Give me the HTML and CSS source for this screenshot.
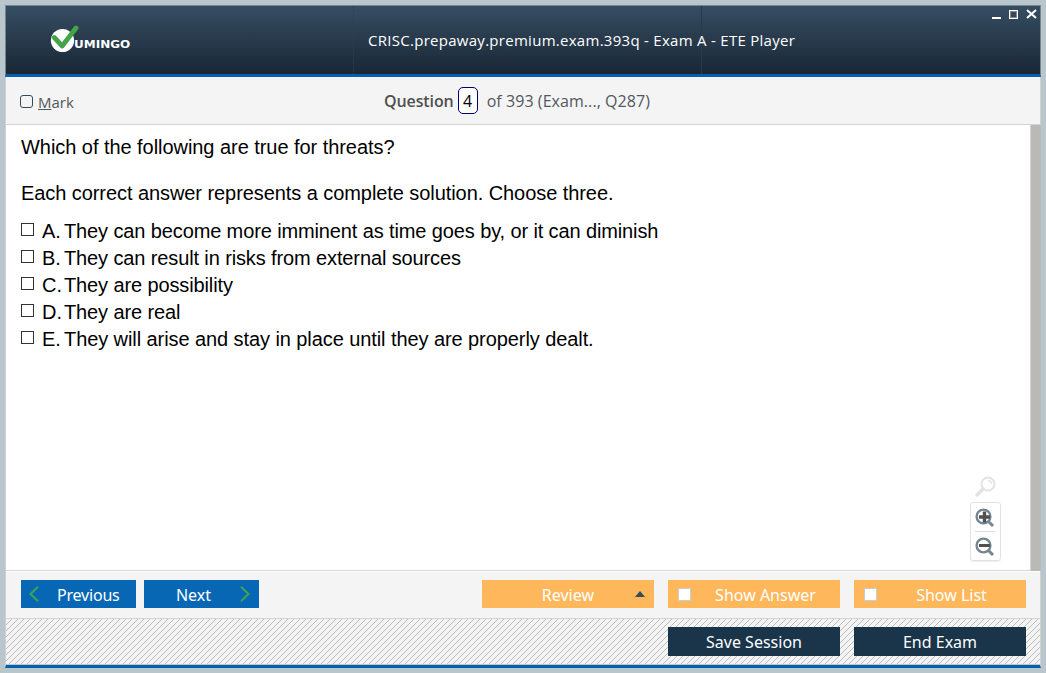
FILE: index.html
```html
<!DOCTYPE html>
<html lang="en">
<head>
<meta charset="utf-8">
<title>ETE Player</title>
<link rel="stylesheet" href="styles.css">
</head>
<body>
<div class="window">
  <header class="titlebar">
    <div class="brand">
      <svg class="brand-mark" width="30" height="28" viewBox="0 0 30 28"><circle cx="12.500" cy="15.500" r="11.600" fill="#fff"/><path d="M4.300 12.500L12.200 21L26 3" fill="none" stroke="#43a547" stroke-width="4.800" stroke-linecap="round" stroke-linejoin="round"/></svg>
      <span class="brand-name">UMINGO</span>
    </div>
    <h1 class="title"><span>CRISC.prepaway.premium.exam.393q - Exam A - ETE Player</span></h1>
    <div class="spacer"></div>
    <svg class="controls" width="47" height="12" viewBox="0 0 47 12" shape-rendering="crispEdges"><path d="M1 8h9v2H1z" fill="#fff"/><path d="M18.500 1.500h8v8h-8z" fill="none" stroke="#fff"/><path d="M19.500 2.500h6v6h-6z" fill="none" stroke="#8d8980"/><path d="M36 1L45 9M45 1L36 9" stroke="#fff" stroke-width="2" shape-rendering="auto"/></svg>
  </header>
  <div class="toolbar">
    <label class="mark"><i class="mark-box"></i><span><u>M</u>ark</span></label>
    <div class="position"><b>Question</b><span class="number">4</span><span class="total">of 393 (Exam..., Q287)</span></div>
  </div>
  <main class="content">
    <div class="page">
      <p class="q1"><span>Which of the following are true for threats?</span></p>
      <p class="q2"><span>Each correct answer represents a complete solution. Choose three.</span></p>
      <ul class="answers">
        <li><i class="box"></i><b>A.</b><span>They can become more imminent as time goes by, or it can diminish</span></li>
        <li><i class="box"></i><b>B.</b><span>They can result in risks from external sources</span></li>
        <li><i class="box"></i><b>C.</b><span>They are possibility</span></li>
        <li><i class="box"></i><b>D.</b><span>They are real</span></li>
        <li><i class="box"></i><b>E.</b><span>They will arise and stay in place until they are properly dealt.</span></li>
      </ul>
      <div class="zoom">
        <svg width="22" height="22" viewBox="0 0 22 22" fill="none" stroke="#e2e2e2"><circle cx="13" cy="8" r="6.500" stroke-width="2"/><path d="M8 13L2 19" stroke-width="3.200" stroke-linecap="round"/><path d="M13 4.500a3.500 3.500 0 0 1 3.500 3.500" stroke-width="1.300"/></svg>
        <div class="zoom-panel">
          <svg width="20" height="20" viewBox="0 0 20 20" fill="none"><circle cx="8.500" cy="8.500" r="6.900" stroke="#758592" stroke-width="2.400"/><path d="M13.500 13.500L18 18" stroke="#758592" stroke-width="3"/><path d="M9.500 3.500v11M4 9h11" stroke="#50504f" stroke-width="3.400"/></svg>
          <hr>
          <svg width="20" height="20" viewBox="0 0 20 20" fill="none"><circle cx="8.500" cy="8.500" r="6.900" stroke="#758592" stroke-width="2.400"/><path d="M13.500 13.500L18 18" stroke="#758592" stroke-width="3"/><path d="M4 8.500h11" stroke="#50504f" stroke-width="3"/></svg>
        </div>
      </div>
    </div>
    <div class="scrollbar"></div>
  </main>
  <div class="actions">
    <button class="btn nav prev"><svg width="10" height="16" viewBox="0 0 10 16"><path d="M9 .8L1.500 8L9 15.200" fill="none" stroke="#3fa451" stroke-width="2"/></svg><span>Previous</span></button>
    <button class="btn nav next"><span>Next</span><svg width="10" height="16" viewBox="0 0 10 16"><path d="M1 .8L8.500 8L1 15.200" fill="none" stroke="#3fa451" stroke-width="2"/></svg></button>
    <div class="spacer"></div>
    <button class="btn option review"><span>Review</span><svg width="10" height="6" viewBox="0 0 10 6"><path d="M5 0L10 6H0z" fill="#344b5e"/></svg></button>
    <button class="btn option check"><i></i><span>Show Answer</span></button>
    <button class="btn option check"><i></i><span>Show List</span></button>
  </div>
  <footer class="session">
    <button class="btn dark"><span>Save Session</span></button>
    <button class="btn dark"><span>End Exam</span></button>
  </footer>
</div>
</body>
</html>
```
FILE: styles.css
```css
* { box-sizing: border-box; }
body { margin: 0; padding: 5px; width: 1046px; height: 673px; overflow: hidden; background: #b9c6cc; font-family: "Open Sans", sans-serif; }
p, h1, ul { margin: 0; padding: 0; font-weight: 400; }
svg { display: block; flex: none; }
.spacer { flex: 1; }
.window { width: 1036px; height: 663px; display: flex; flex-direction: column; border-left: 1px solid #d0d0d0; border-right: 1px solid #d0d0d0; border-bottom: 3px solid #0560b0; }
.titlebar { height: 72px; margin: 0 -1px; display: flex; flex: none; border: 1px solid #76868f; border-bottom: 3px solid #0560b0; background: linear-gradient(#364d62, #192735); }
.brand { width: 348px; padding: 19px 0 0 44px; display: flex; border-right: 1px dotted #293e57; }
.brand-name { margin: 10px 0 0 -6px; color: #fff; font: bold 10px/20px "DejaVu Sans", sans-serif; transform: scaleX(1.2); transform-origin: left; }
.title { width: 348px; padding: 23px 0 0 14px; color: #fff; font-size: 15px; letter-spacing: 0.28px; line-height: 22px; white-space: nowrap; border-right: 1px solid #293b4b; }
.controls { margin: 3px 2px 0 0; }
.toolbar { height: 48px; flex: none; display: flex; background: #f4f4f4; border-bottom: 1px solid #d3d3d3; color: #52585d; font-size: 16px; line-height: 24px; }
.mark { width: 378px; display: flex; padding: 13px 0 0 14px; font-size: 15px; }
.mark-box { width: 13px; height: 13px; margin: 5px 5px 0 0; border: 1px solid #344b5e; border-radius: 3px; }
.position { display: flex; padding-top: 10px; line-height: 28px; }
.position b { font-weight: 600; color: #505050; letter-spacing: -0.1px; }
.number { width: 20px; height: 27px; margin: 0 9px 0 4px; text-align: center; line-height: 27px; border: 1px solid #00006e; border-radius: 5px; background: #fff; color: #000; }
.total { letter-spacing: 0.06px; }
.content { flex: 1; min-height: 0; display: flex; background: #fff; }
.page { position: relative; flex: 1; padding: 10px 0 0 15px; border-right: 1px solid #d3d3d3; border-bottom: 1px solid #d3d3d3; color: #000; font: 20px/24px "Liberation Sans", Arial, sans-serif; }
.scrollbar { width: 10px; margin-right: -1px; background: #bbb9b5; }
.q1 { letter-spacing: -0.05px; }
.q2 { margin-top: 22px; letter-spacing: -0.07px; }
.answers { list-style: none; margin-top: 13px; }
.answers li { display: flex; height: 27px; line-height: 26px; white-space: nowrap; }
.answers b { width: 22px; margin-left: 8px; font-weight: 400; }
.answers span { letter-spacing: -0.12px; }
.answers li:last-child span { letter-spacing: -0.08px; }
.box { width: 13px; height: 13px; margin-top: 5px; border: 1px solid #333; }
.zoom { position: absolute; right: 29px; bottom: 9px; width: 31px; }
.zoom > svg { margin: 0 0 4px 5px; }
.zoom-panel { height: 59px; padding: 5px 5px 5px 4px; border: 1px solid #e2e2e2; border-radius: 3px; box-shadow: 0 1px 1px #eee; }
.zoom-panel hr { height: 1px; margin: 3px 0 5px 0; border: 0; background: #ddd; }
.actions { height: 48px; flex: none; display: flex; padding: 8px 14px 0 15px; border-top: 1px solid #fff; border-bottom: 1px solid #d3d3d3; background: #f4f4f4; }
.btn { display: flex; align-items: center; justify-content: center; height: 28px; padding: 0; border: 0; color: #fff; font: 16px/28px "Noto Sans", sans-serif; white-space: nowrap; }
.actions .btn span { padding-top: 2px; }
.nav { width: 115px; background: #0867b5; }
.prev { justify-content: flex-start; padding-left: 8px; margin-right: 8px; }
.prev span { margin-left: 18px; letter-spacing: -0.2px; }
.next { justify-content: flex-end; padding-right: 9px; }
.next span { margin-right: 29px; }
.option { width: 172px; margin-left: 14px; background: #ffb75c; }
.review { justify-content: flex-end; padding-right: 9px; }
.review span { margin-right: 41px; }
.check { justify-content: flex-start; padding-left: 10px; }
.check i { width: 13px; height: 13px; border: 1px solid #ccc; background: #fff; }
.check span { flex: 1; text-align: center; }
.session { height: 46px; flex: none; display: flex; justify-content: flex-end; padding: 8px 14px 0 0; border-bottom: 1px solid #c5c5c5; background: #f4f4f4 url("data:image/svg+xml,%3Csvg xmlns='http://www.w3.org/2000/svg' width='6' height='6'%3E%3Cpath d='M5 0h1v1h-1zM4 1h1v1h-1zM3 2h1v1h-1zM2 3h1v1h-1zM1 4h1v1h-1zM0 5h1v1h-1z' fill='%23bdbdbd'/%3E%3C/svg%3E"); }
.dark { width: 172px; height: 29px; margin-left: 14px; background: #1a344a; }
```
